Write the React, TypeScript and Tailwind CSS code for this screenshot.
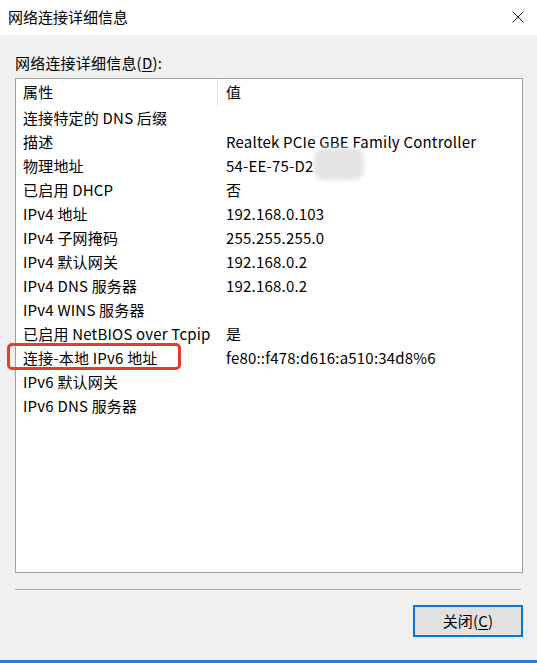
import React from 'react';

const rows: [string, string][] = [
  ['连接特定的 DNS 后缀', ''],
  ['描述', 'Realtek PCIe GBE Family Controller'],
  ['物理地址', '54-EE-75-D2'],
  ['已启用 DHCP', '否'],
  ['IPv4 地址', '192.168.0.103'],
  ['IPv4 子网掩码', '255.255.255.0'],
  ['IPv4 默认网关', '192.168.0.2'],
  ['IPv4 DNS 服务器', '192.168.0.2'],
  ['IPv4 WINS 服务器', ''],
  ['已启用 NetBIOS over Tcpip', '是'],
  ['连接-本地 IPv6 地址', 'fe80::f478:d616:a510:34d8%6'],
  ['IPv6 默认网关', ''],
  ['IPv6 DNS 服务器', ''],
];

const font = { fontFamily: '"Noto Sans CJK SC", "Liberation Sans", sans-serif' };

function App() {
  return (
    <div
      className="w-[537px] h-[663px] bg-[#f0f0f0] flex flex-col text-[15px] text-black overflow-hidden"
      style={font}
    >
      <div className="h-[35px] bg-white flex items-center justify-between pl-[8px] pr-[13px] shrink-0">
        <span className="leading-none mt-[-3px]">网络连接详细信息</span>
        <svg width="12" height="12" viewBox="0 0 12 12" className="text-[#222] mt-[-2px]">
          <path d="M0.5 0.5 L11.5 11.5 M11.5 0.5 L0.5 11.5" stroke="currentColor" strokeWidth="1" fill="none" />
        </svg>
      </div>

      <div className="flex-1 flex flex-col px-[15px] tracking-[0.2px]">
        <div className="mt-[17px] h-[22px] leading-[22px]">
          网络连接详细信息(<span className="underline underline-offset-2">D</span>):
        </div>

        <div className="relative mt-[4px] h-[495px] w-[508px] bg-white border border-[#a0a0a0]">
          <div className="flex h-[27px] items-center">
            <div className="w-[202px] h-full flex items-center pl-[7px] border-r border-[#e5e5e5]">属性</div>
            <div className="pl-[8px]">值</div>
          </div>
          {rows.map(([k, v]) => (
            <div key={k} className="flex h-[24px] items-center">
              <div className="w-[203px] pl-[7px] whitespace-nowrap">{k}</div>
              <div className="pl-[7px] whitespace-nowrap">{v}</div>
            </div>
          ))}
          {/* smudge over the MAC address */}
          <div className="absolute left-[298px] top-[69px] w-[50px] h-[32px] rounded-[10px] bg-[#e4e4e4] blur-[2px]" />
          {/* red highlight */}
          <div className="absolute left-[-9px] top-[264px] w-[174px] h-[27px] rounded-[5px] border-[3px] border-[#e53a2e]" />
        </div>

        <div className="mt-[16px] h-[2px] w-[506px] border-t border-[#a0a0a0] border-b border-b-white" />

        <div className="flex justify-end mt-[14px]">
          <button className="w-[110px] h-[32px] mr-[-1px] bg-[#e1e1e1] border-2 border-[#0078d7] flex items-center justify-center text-[15px]">
            关闭(<span className="underline underline-offset-2">C</span>)
          </button>
        </div>
      </div>

      <div className="h-[3px] bg-[#2b7bd0] shrink-0" />
    </div>
  );
}

export default App;
